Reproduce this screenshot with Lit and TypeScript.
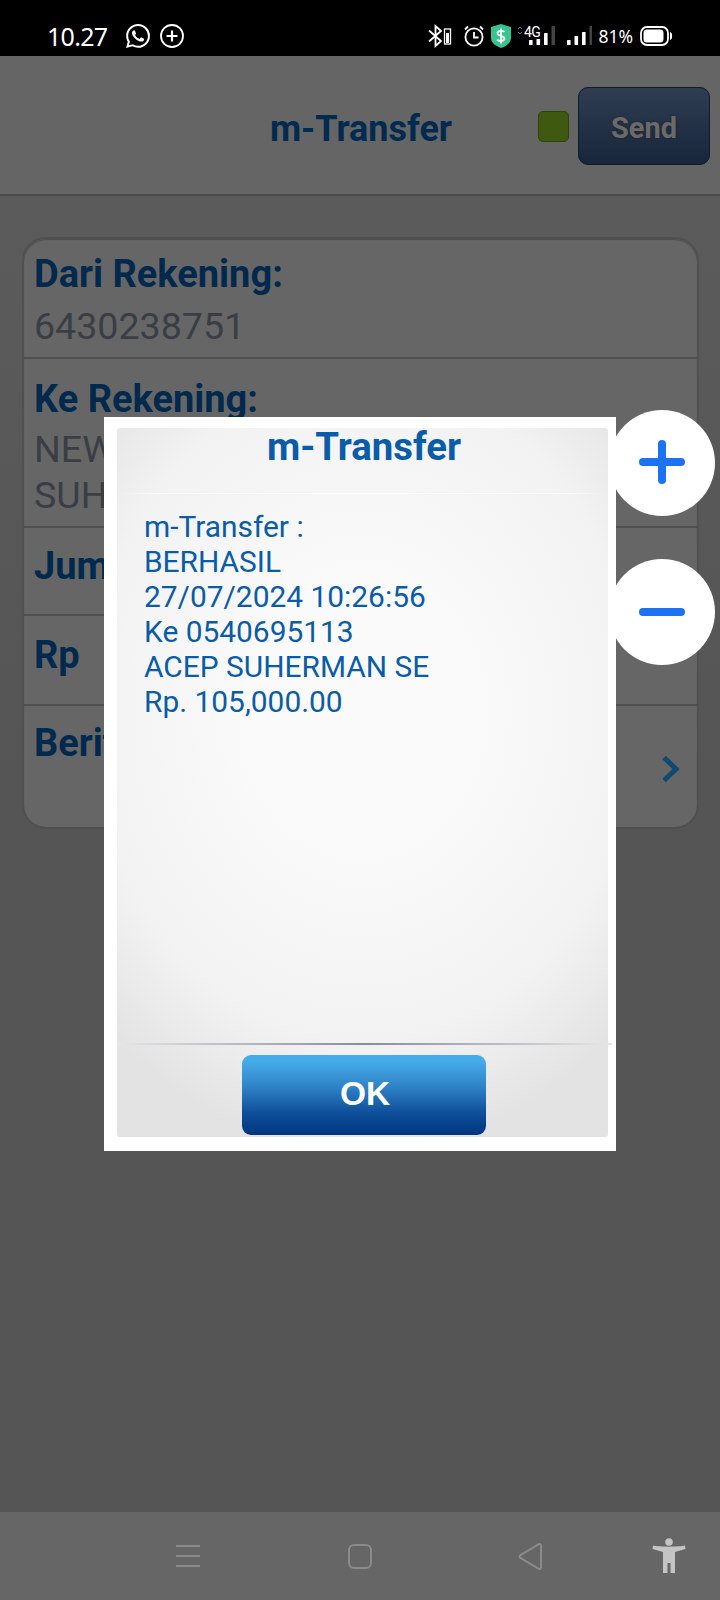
import { LitElement, css, html, svg } from "lit";
import { customElement } from "lit/decorators.js";

const WHATSAPP =
  "M17.472 14.382c-.297-.149-1.758-.867-2.03-.967-.273-.099-.471-.148-.67.15-.197.297-.767.966-.94 1.164-.173.199-.347.223-.644.075-.297-.15-1.255-.463-2.39-1.475-.883-.788-1.48-1.761-1.653-2.059-.173-.297-.018-.458.13-.606.134-.133.298-.347.446-.52.149-.174.198-.298.298-.497.099-.198.05-.371-.025-.52-.075-.149-.669-1.612-.916-2.207-.242-.579-.487-.5-.669-.51-.173-.008-.371-.01-.57-.01-.198 0-.52.074-.792.372-.272.297-1.04 1.016-1.04 2.479 0 1.462 1.065 2.875 1.213 3.074.149.198 2.096 3.2 5.077 4.487.709.306 1.262.489 1.694.625.712.227 1.36.195 1.871.118.571-.085 1.758-.719 2.006-1.413.248-.694.248-1.289.173-1.413-.074-.124-.272-.198-.57-.347m-5.421 7.403h-.004a9.87 9.87 0 01-5.031-1.378l-.361-.214-3.741.982.998-3.648-.235-.374a9.86 9.86 0 01-1.51-5.26c.001-5.45 4.436-9.884 9.888-9.884 2.64 0 5.122 1.03 6.988 2.898a9.825 9.825 0 012.893 6.994c-.003 5.45-4.437 9.884-9.885 9.884m8.413-18.297A11.815 11.815 0 0012.05 0C5.495 0 .16 5.335.157 11.892c0 2.096.547 4.142 1.588 5.945L.057 24l6.305-1.654a11.882 11.882 0 005.683 1.448h.005c6.554 0 11.89-5.335 11.893-11.893a11.821 11.821 0 00-3.48-8.413z";

// signal strength bars: the last one is the unlit part
const bars = (heights: number[], gap: number, base: number) =>
  heights.map(
    (h, i) =>
      svg`<rect x=${i * gap} y=${base - h} width="3.6" height=${h} rx="0.5" fill=${i < heights.length - 1 ? "#fff" : "#444"}></rect>`
  );

@customElement("app-root")
export class AppRoot extends LitElement {
  static styles = css`
    :host {
      display: block;
      position: relative;
      width: 720px;
      height: 1600px;
      overflow: hidden;
      font-family: Roboto, "Liberation Sans", sans-serif;
      background: #565656;
    }

    .page {
      display: flex;
      flex-direction: column;
      height: 1600px;
    }

    /* status bar */
    .status {
      flex: none;
      height: 56px;
      box-sizing: border-box;
      background: #000;
      color: #fff;
      display: flex;
      align-items: center;
      padding: 16px 47px 0 47px;
    }
    .time {
      font: 400 25px "Noto Sans", sans-serif;
      letter-spacing: -0.7px;
      margin-right: 19px;
    }
    .status svg {
      display: block;
      flex: none;
    }
    .status-right {
      margin-left: auto;
      display: flex;
      align-items: center;
    }
    .pct {
      font: 400 17.5px "Noto Sans", sans-serif;
      margin: 0 7px 0 6px;
    }

    /* app header */
    .header {
      flex: none;
      height: 140px;
      box-sizing: border-box;
      background: #656565;
      border-bottom: 2px solid #4c4c4c;
      display: flex;
      align-items: center;
      padding: 2px 10px 0 0;
    }
    .header h1 {
      margin: 5px 0 0;
      flex: 1;
      padding-left: 184px;
      text-align: center;
      font-size: 36px;
      font-weight: 700;
      color: #002a4f;
    }
    .led {
      width: 31px;
      height: 31px;
      box-sizing: border-box;
      margin: 0 9px 0 0;
      background: #3f5a10;
      border: 1px solid #2e4310;
      border-radius: 5px;
    }
    .send {
      width: 132px;
      height: 78px;
      box-sizing: border-box;
      padding-top: 3px;
      border: 1px solid #101a28;
      border-radius: 10px;
      background: linear-gradient(#2f3d53, #18263c);
      color: #6a6a6a;
      font: 700 29px Roboto, sans-serif;
      text-shadow: 0 0 3px #222;
      display: flex;
      align-items: center;
      justify-content: center;
    }

    /* form */
    .content {
      flex: 1;
      background: linear-gradient(#5b5b5b, #555 45%);
      padding: 41px 22px 0;
    }
    .card {
      width: 677px;
      box-sizing: border-box;
      background: #666;
      border: 2px solid #505050;
      border-radius: 24px;
      box-shadow: inset 0 1px 1px #4c4c4c;
      overflow: hidden;
    }
    .row {
      box-sizing: border-box;
      padding: 13px 10px 0;
      border-bottom: 2px solid #505050;
      position: relative;
    }
    .row:last-child {
      border-bottom: 0;
    }
    .r1 { height: 120px; }
    .r1 .value { margin-top: 7px; }
    .r2 { height: 169px; padding-top: 18px; }
    .r3 { height: 88px; padding-top: 16px; }
    .r4 { height: 90px; padding-top: 17px; }
    .r5 { height: 121px; padding-top: 15px; }
    .label {
      font-size: 38px;
      line-height: 44px;
      font-weight: 700;
      color: #00294d;
      white-space: nowrap;
    }
    .value {
      font-size: 37.6px;
      line-height: 46px;
      margin-top: 5px;
      color: #3a3e44;
      white-space: nowrap;
    }
    .value + .value {
      margin-top: 0;
    }
    .chevron {
      position: absolute;
      right: 17px;
      top: 49px;
    }

    /* nav bar */
    .nav {
      flex: none;
      height: 88px;
      background: #666;
      position: relative;
    }
    .nav svg {
      position: absolute;
      top: 0;
      left: 0;
    }

    /* dialog over the page */
    .dialog {
      position: absolute;
      left: 104px;
      top: 417px;
      width: 512px;
      height: 734px;
      box-sizing: border-box;
      background: #fff;
      padding: 11px 8px 14px 13px;
    }
    .panel {
      position: relative;
      height: 100%;
      display: flex;
      flex-direction: column;
      border-radius: 3px;
      background: radial-gradient(ellipse 75% 62% at 50% 40%, #fafafa 30%, #f2f2f2 75%, #e3e3e3 100%);
    }
    .panel h2 {
      margin: 0;
      height: 66px;
      box-sizing: border-box;
      padding-left: 3px;
      text-align: center;
      font-size: 38.4px;
      line-height: 38px;
      font-weight: 700;
      color: #0a5ca6;
      border-bottom: 1px solid;
      border-image: linear-gradient(90deg, transparent, #fff 12%, #fff 88%, transparent) 1;
    }
    .msg {
      flex: 1;
      padding: 15px 0 0 27px;
      font-size: 29.9px;
      line-height: 35px;
      color: #0a5ca6;
    }
    .rule {
      height: 2px;
      margin-right: -4px;
      background: linear-gradient(90deg, #e6e6e6, #878c9c 50%, #e6e6e6);
    }
    .actions {
      flex: none;
      height: 92px;
      display: flex;
      justify-content: center;
      padding-top: 10px;
      box-sizing: border-box;
    }
    .ok {
      width: 244px;
      height: 80px;
      margin-left: 2px;
      padding: 0 0 2px 3px;
      box-sizing: border-box;
      border-radius: 9px;
      background: linear-gradient(#46abe9 8%, #2f82c6 40%, #0f4f99 72%, #003580);
      color: #fff;
      font: 700 33.5px "Liberation Sans", Arial, sans-serif;
      display: flex;
      align-items: center;
      justify-content: center;
    }

    /* floating zoom buttons */
    .zoom {
      position: absolute;
      left: 609px;
      width: 106px;
      height: 106px;
      border-radius: 50%;
      background: #fff;
    }
    .zoom svg {
      display: block;
    }
    .plus { top: 410px; }
    .minus { top: 559px; }
  `;

  render() {
    return html`
      <div class="page">
        <div class="status">
          <span class="time">10.27</span>
          <svg width="24" height="24" viewBox="0 0 24 24" fill="#fff" style="margin-right:10px"><path d=${WHATSAPP}></path></svg>
          <svg width="24" height="24" viewBox="0 0 24 24" fill="none" stroke="#fff">
            <circle cx="12" cy="12" r="11" stroke-width="1.8"></circle>
            <path d="M12 6.5v11M6.5 12h11" stroke-width="2.2"></path>
          </svg>
          <div class="status-right">
            <svg width="24" height="24" viewBox="0 0 24 24" fill="none" stroke="#fff" stroke-width="1.8" style="margin-right:12px">
              <path d="M1 6.5 13 17l-5.5 5V2L13 7 1 17.5"></path>
              <rect x="16.5" y="5" width="6" height="15" stroke-width="1.3"></rect>
              <rect x="18" y="9" width="3" height="10" fill="#fff" stroke="none"></rect>
            </svg>
            <svg width="20" height="22" viewBox="0 0 20 22" fill="none" stroke="#fff" stroke-width="1.8" style="margin-right:7px">
              <circle cx="10" cy="12" r="8.6"></circle>
              <path d="M10 7v5.5h4.5M1 4.5 4 1.5M19 4.5l-3-3"></path>
            </svg>
            <svg width="20" height="24" viewBox="0 0 20 24" style="margin-right:6px">
              <path d="M10 0 20 3v11c0 5-5 8-10 10C5 22 0 19 0 14V3z" fill="#37c48e"></path>
              <path d="M13.5 8c-1-1.6-7-2-7 1.2 0 3.4 7 1.8 7 5.4 0 3-6 2.8-7.4 1M10 4.5v15" fill="none" stroke="#fff" stroke-width="1.8"></path>
            </svg>
            <svg width="38" height="24" viewBox="0 0 38 24" style="margin-right:12px">
              <path d="M1 5 3 3 5 5M1 8l2 2 2-2" fill="none" stroke="#666" stroke-width="1"></path>
              <text x="7" y="13" font-family="Roboto" font-size="14" letter-spacing="-0.5" fill="#fff">4G</text>
              <g transform="translate(12 0)">${bars([5, 6, 12, 19], 7.5, 21)}</g>
            </svg>
            <svg width="25" height="20" viewBox="0 0 25 20">${bars([5, 9, 13, 19], 7.5, 19)}</svg>
            <span class="pct">81%</span>
            <svg width="33" height="20" viewBox="0 0 33 20">
              <rect x="1" y="1" width="27" height="18" rx="6" fill="none" stroke="#fff" stroke-width="1.8"></rect>
              <rect x="3.5" y="3.5" width="20" height="13" rx="3.5" fill="#fff"></rect>
              <path d="M30.5 6.5c1.5.8 1.5 6.2 0 7z" fill="#fff" stroke="#fff"></path>
            </svg>
          </div>
        </div>

        <header class="header">
          <h1>m-Transfer</h1>
          <div class="led"></div>
          <div class="send">Send</div>
        </header>

        <main class="content">
          <div class="card">
            <div class="row r1">
              <div class="label">Dari Rekening:</div>
              <div class="value">6430238751</div>
            </div>
            <div class="row r2">
              <div class="label">Ke Rekening:</div>
              <div class="value">NEW</div>
              <div class="value">SUH</div>
            </div>
            <div class="row r3"><div class="label">Jum</div></div>
            <div class="row r4"><div class="label">Rp</div></div>
            <div class="row r5">
              <div class="label">Berit</div>
              <svg class="chevron" width="19" height="28" viewBox="0 0 19 28" fill="none" stroke="#0f4a72" stroke-width="5">
                <path d="M3 2.5 15 14 3 25.5"></path>
              </svg>
            </div>
          </div>
        </main>

        <nav class="nav">
          <svg width="720" height="88" viewBox="0 0 720 88" fill="none" stroke="#8b8b8b" stroke-width="2">
            <path d="M176 34h24M176 44h24M176 54h24"></path>
            <rect x="349" y="33" width="22" height="23" rx="5"></rect>
            <path d="M541 33.5a1.5 1.5 0 0 0-2.2-1.3l-18.4 11a1.5 1.5 0 0 0 0 2.6l18.4 11a1.5 1.5 0 0 0 2.2-1.3z"></path>
            <g fill="#c4c4c4" stroke="none">
              <circle cx="669" cy="30" r="3.8"></circle>
              <path d="M653 33.5c6 1.5 26 1.5 32 0l.5 3.5-10.5 3V61h-4.5V51h-3v10h-4.5V40L652.5 37z"></path>
            </g>
          </svg>
        </nav>
      </div>

      <div class="dialog">
        <div class="panel">
          <h2>m-Transfer</h2>
          <div class="msg">
            m-Transfer :<br />BERHASIL<br />27/07/2024 10:26:56<br />Ke 0540695113<br />ACEP SUHERMAN SE<br />Rp. 105,000.00
          </div>
          <div class="rule"></div>
          <div class="actions"><div class="ok">OK</div></div>
        </div>
      </div>

      <div class="zoom plus">
        <svg width="106" height="106" viewBox="0 0 106 106" fill="none" stroke="#1d72f3" stroke-width="8" stroke-linecap="round">
          <path d="M53 34v36M34 52h38"></path>
        </svg>
      </div>
      <div class="zoom minus">
        <svg width="106" height="106" viewBox="0 0 106 106" fill="none" stroke="#1d72f3" stroke-width="8" stroke-linecap="round">
          <path d="M34 53h38"></path>
        </svg>
      </div>
    `;
  }
}
